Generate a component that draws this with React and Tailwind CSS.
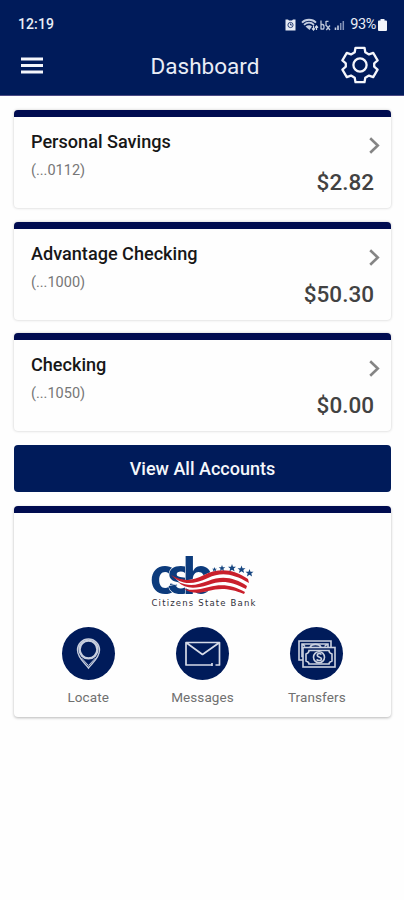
// src/App.jsx
import React from 'react';

const accounts = [
  { name: 'Personal Savings', number: '(...0112)', balance: '$2.82' },
  { name: 'Advantage Checking', number: '(...1000)', balance: '$50.30' },
  { name: 'Checking', number: '(...1050)', balance: '$0.00' }
];

function StatusIcons() {
  return (
    <svg className="w-[60px] h-3.5" viewBox="0 0 60 14" fill="none">
      {/* Alarm */}
      <path d="M0.5 1.5H3L4 2.5H7L8 1.5H10.5V12.5H0.5Z" fill="#e6ebf5" />
      <circle cx="5.5" cy="7" r="2.6" stroke="#001b5a" strokeWidth="0.8" />
      <path d="M5.5 5.5V7H7" stroke="#001b5a" strokeWidth="0.8" />
      {/* Wifi */}
      <path d="M17 4.6C20.5 0.8 27.5 0.8 31 4.6M19 6.8C22 4 26 4 29 6.8" stroke="#c3cde0" strokeWidth="1.8" />
      <path d="M20.5 8.4C22.5 6.7 25.5 6.7 27 8.4L24.5 12Z" fill="#c3cde0" />
      <path d="M28.5 7.5V12M27 10.3L28.5 12L30 10.3M31.5 12V8M30 9.7L31.5 8L33 9.7" stroke="#d5dcea" strokeWidth="1.2" />
      {/* Voice over LTE */}
      <path d="M36 2.5V11.5M36 6.5H37.5Q39 6.5 39 9T37.5 11H36M41 3V8M41 3.4H43.5M41.3 7.5L45 12M45 7.5L41.3 12" stroke="#bdc7db" strokeWidth="1.3" />
      {/* Signal */}
      <path d="M50.5 12V9.5M53 12V7.5" stroke="#c3cde0" strokeWidth="1.6" />
      <path d="M55.7 12V5M58.3 12V3" stroke="#8494b8" strokeWidth="1.5" />
    </svg>
  );
}

function GearIcon() {
  return (
    <svg className="w-[38px] h-[38px]" viewBox="0 0 38 38" fill="none" stroke="#f4f6fb" strokeWidth="2.3" strokeLinejoin="round">
      <path d="M14.5 1.8H23.5L24.3 6.2L28 8.4L32.2 6.9L36.6 14.4L33.2 17.3V20.7L36.6 23.6L32.2 31.1L28 29.6L24.3 31.8L23.5 36.2H14.5L13.7 31.8L10 29.6L5.8 31.1L1.4 23.6L4.8 20.7V17.3L1.4 14.4L5.8 6.9L10 8.4L13.7 6.2Z" />
      <circle cx="19" cy="19" r="6.6" />
    </svg>
  );
}

function Header() {
  return (
    <header className="h-24 bg-[#001b5a] border-b border-[#4b4a83] text-[#e9edf6]">
      <div className="h-9 pt-[15px] pl-[18px] pr-[17px] flex items-start justify-between text-[14px] leading-[18px]">
        <span className="tracking-[0.1px] font-medium">12:19</span>
        <div className="flex items-center">
          <StatusIcons />
          <span className="ml-[5px] pt-px text-[14.5px] tracking-[-0.4px]">93%</span>
          <svg className="ml-[2px] w-[9px] h-3" viewBox="0 0 9 12" fill="#f1f4fa">
            <path d="M2.5 0H6.5V1.5H8Q9 1.5 9 2.5V11Q9 12 8 12H1Q0 12 0 11V2.5Q0 1.5 1 1.5H2.5Z" />
          </svg>
        </div>
      </div>
      <div className="h-[58px] pl-[21px] pr-[25px] grid grid-cols-[38px_1fr_38px] items-center">
        <button aria-label="Open menu">
          <svg className="w-[22px] h-[17px]" viewBox="0 0 22 17" fill="#f4f6fb">
            <path d="M0 0.5H22V3.5H0ZM0 7H22V10H0ZM0 13.5H22V16.5H0Z" />
          </svg>
        </button>
        <h1 className="text-center text-[22.5px] leading-7 pl-[10px] pt-px">Dashboard</h1>
        <button aria-label="Settings">
          <GearIcon />
        </button>
      </div>
    </header>
  );
}

function AccountCard({ account }) {
  return (
    <div className="h-[98px] rounded bg-[#fefefe] border-t-[7px] border-[#000c50] shadow-[0_0_3px_rgba(0,0,0,0.22)] px-[17px] pt-[14px]">
      <div className="flex justify-between">
        <div>
          <h2 className="text-[18.1px] leading-[22px] font-medium text-[#171717]">{account.name}</h2>
          <p className="mt-[9px] text-[14.5px] leading-[18px] text-[#777]">{account.number}</p>
        </div>
        <svg className="mt-[6px] mr-[-6px] w-[11px] h-[17px]" viewBox="0 0 11 17" fill="none" stroke="#858585" strokeWidth="2.6">
          <path d="M1.2 1.2L8.8 8.5L1.2 15.8" />
        </svg>
      </div>
      <p className="mt-[-12px] text-right text-[22.5px] leading-7 font-medium text-[#424242]">{account.balance}</p>
    </div>
  );
}

function BankLogo() {
  return (
    <svg className="w-[112px] h-[54px] overflow-visible" viewBox="0 0 112 54">
      <text
        x="2.8 20.5 37"
        y="41.3"
        transform="scale(0.96 1)"
        fontFamily="Inter, sans-serif"
        fontWeight="700"
        fontSize="52"
        fill="#0c3b7c"
        stroke="#fff"
        strokeWidth="1.2"
        paintOrder="stroke"
      >
        csb
      </text>
      {/* Flag ribbon */}
      <path d="M28 25C38 29 47 27 57 22C74 13 88 17 103 26L98 40C82 33 72 33 61 38C50 41 40 37 36 33Z" fill="#fff" />
      <path d="M24 22C36 29 46 28 57 22C74 14 87 17 101 26L102 30C85 20 74 19 61 25C44 33 33 31 24 22Z" fill="#c91f2b" />
      <path d="M31 29C43 34 50 32 61 28C76 22 88 25 100 33L99 36C84 28 74 27 61 32C48 36 38 36 31 29Z" fill="#c91f2b" />
      <path d="M37 36C48 38 53 36 62 34C76 30 87 33 98 39L97 41C82 35 73 35 61 38C51 41 43 40 37 36Z" fill="#c91f2b" />
      {/* Stars */}
      <g fill="#164681">
        <path id="star" d="M85 11L86 13.8H89L86.8 15.6L87.6 18.5L85 16.8L82.4 18.5L83.2 15.6L81 13.8H84Z" />
        <use href="#star" x="9.5" y="1.5" />
        <use href="#star" x="17.5" y="5" />
        <path d="M75 12L75.9 14.2H78.3L76.4 15.7L77.1 18L75 16.6L72.9 18L73.6 15.7L71.7 14.2H74.1Z" />
        <path d="M67.5 14L68.2 15.7H70L68.6 16.8L69.1 18.6L67.5 17.5L65.9 18.6L66.4 16.8L65 15.7H66.8Z" />
      </g>
      <text x="4.5" y="52.5" textLength="104" fontFamily="DejaVu Sans, sans-serif" fontSize="8.5" fill="#30303a">Citizens State Bank</text>
    </svg>
  );
}

function LocateIcon() {
  return (
    <svg className="w-[53px] h-[53px]" viewBox="0 0 53 53" fill="none" stroke="#c7cede" strokeWidth="1.4">
      <path d="M26.5 41C23 36 15.5 31 15.5 23A11 11 0 0 1 37.5 23C37.5 31 30 36 26.5 41Z" />
      <circle cx="26.5" cy="22.5" r="8.9" strokeWidth="2.4" />
      <path d="M19.5 31L26.5 38.5L33.5 31" strokeWidth="1" />
    </svg>
  );
}

function MessagesIcon() {
  return (
    <svg className="w-[53px] h-[53px]" viewBox="0 0 53 53" fill="none" stroke="#d5dae7" strokeWidth="1.7" strokeLinejoin="round">
      <path d="M35.5 38H10V15.5H43.5V38H39.5M36 36V39M10 15.5L26.5 27.5L43.5 15.5" />
    </svg>
  );
}

function TransfersIcon() {
  return (
    <svg className="w-[53px] h-[53px]" viewBox="0 0 53 53" fill="none" stroke="#cbd2e0" strokeWidth="1.6">
      <path d="M13 33H9V14H41V20M13 29.5H12V17H38V20M13 17.5L15 19.5M37 17.5L34.5 19.5" />
      <path d="M20 20C22 16.5 29 16.5 31 20" />
      <rect x="13" y="20.5" width="32" height="19.5" fill="#001b5a" />
      <path d="M19 23.5H39Q39 26 42 27V34Q39 35 39 37H19Q19 35 16 34V27Q19 26 19 23.5Z" />
      <circle cx="29" cy="30.2" r="5.5" />
      <path d="M31.5 27.5C29 25.5 26.5 27 27.5 29C28.5 30.5 31.5 30 31.5 32C31.5 34 28.5 34 26.5 32.5" />
    </svg>
  );
}

const shortcuts = [
  { label: 'Locate', icon: LocateIcon },
  { label: 'Messages', icon: MessagesIcon },
  { label: 'Transfers', icon: TransfersIcon }
];

function BankCard() {
  return (
    <section className="mt-[14px] h-[211px] rounded bg-[#fefefe] border-t-[7px] border-[#000c50] shadow-[0_1px_3px_rgba(0,0,0,0.28)] pt-[40px]">
      <div className="flex justify-center">
        <BankLogo />
      </div>
      <div className="mt-5 px-[17px] grid grid-cols-3">
        {shortcuts.map(({ label, icon: Icon }) => (
          <button key={label} className="flex flex-col items-center">
            <span className="w-[53px] h-[53px] rounded-full bg-[#001b5a]">
              <Icon />
            </span>
            <span className="mt-[8px] text-[13.5px] leading-[18px] tracking-[0.1px] text-[#707070]">{label}</span>
          </button>
        ))}
      </div>
    </section>
  );
}

function App() {
  return (
    <div className="h-[900px] overflow-hidden bg-[#fefefe] font-['Roboto',sans-serif]">
      <Header />
      <main className="px-[14px] pr-[13px] pt-[14px]">
        <div className="flex flex-col gap-[13.5px]">
          {accounts.map((account) => (
            <AccountCard key={account.name} account={account} />
          ))}
        </div>
        <button className="mt-[13.6px] block w-full h-[47.5px] rounded bg-[#001b5a] text-[18px] font-medium text-[#f5f7fb]">
          View All Accounts
        </button>
        <BankCard />
      </main>
    </div>
  );
}

export default App;
